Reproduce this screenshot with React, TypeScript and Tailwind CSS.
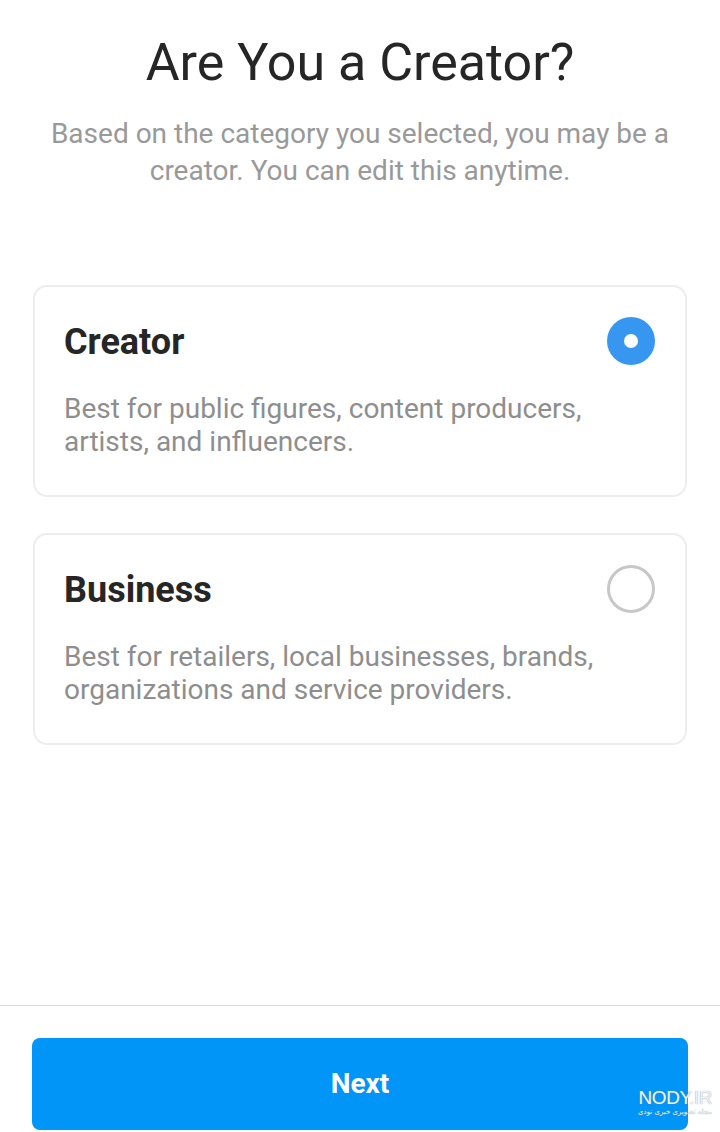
const options = [
  {
    title: 'Creator',
    desc: 'Best for public figures, content producers, artists, and influencers.',
    selected: true,
  },
  {
    title: 'Business',
    desc: 'Best for retailers, local businesses, brands, organizations and service providers.',
    selected: false,
  },
];

function Radio({ on }: { on: boolean }) {
  if (on) {
    return (
      <div className="flex h-[48px] w-[48px] shrink-0 items-center justify-center rounded-full bg-[#3797f0]">
        <div className="h-[14px] w-[14px] rounded-full bg-white" />
      </div>
    );
  }
  return <div className="h-[48px] w-[48px] shrink-0 rounded-full border-[3px] border-[#c7c7c7]" />;
}

export default function App() {
  return (
    <div className="relative flex h-[1132px] w-[720px] flex-col bg-white font-['Roboto',sans-serif]">
      <div className="flex flex-col items-center px-[30px] pt-[31px] text-center">
        <h1 className="text-[52px] leading-[64px] text-[#262626]">Are You a Creator?</h1>
        <p className="mt-[20px] text-[28px] leading-[37px] text-[#999999]">
          Based on the category you selected, you may be a creator. You can edit this anytime.
        </p>
      </div>

      <div className="mt-[96px] flex flex-col gap-[36px] px-[33px]">
        {options.map((o) => (
          <div
            key={o.title}
            className="flex h-[212px] items-start justify-between rounded-[14px] border-2 border-[#ededed] pl-[29px] pr-[30px] pt-[31px]"
          >
            <div className="flex flex-col">
              <div className="text-[36px] font-bold leading-[48px] text-[#262626]">{o.title}</div>
              <div className="mt-[26px] max-w-[540px] text-[28px] leading-[33px] text-[#8e8e8e]">{o.desc}</div>
            </div>
            <div className="mt-[-1px]">
              <Radio on={o.selected} />
            </div>
          </div>
        ))}
      </div>

      <div className="mt-auto border-t border-[#dbdbdb] px-[32px] pb-[2px] pt-[32px]">
        <button className="flex h-[92px] w-full items-center justify-center rounded-[8px] bg-[#0095f6] text-[28px] font-bold text-white">
          Next
        </button>
      </div>

      {/* watermark */}
      <div className="absolute bottom-[16px] right-[8px] flex flex-col items-end leading-none text-[#eef2f6] [text-shadow:0_0_1px_#7d8790]">
        <span className="font-['Liberation_Sans',sans-serif] text-[19px] tracking-tight">NODY.IR</span>
        <span className="mt-[2px] font-['DejaVu_Sans',sans-serif] text-[7px]">مجله تصویری خبری نودی</span>
      </div>
    </div>
  );
}
